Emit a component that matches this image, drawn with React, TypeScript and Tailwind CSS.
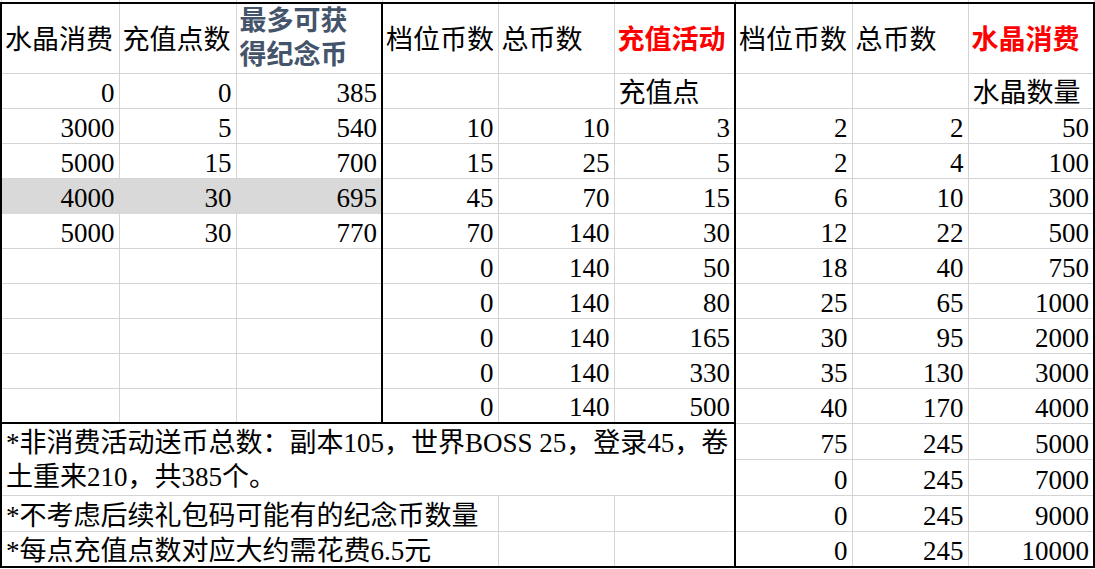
const WIDTHS = ['w-[118px]', 'w-[117px]', 'w-[146px]', 'w-[116px]', 'w-[116px]', 'w-[121px]', 'w-[117px]', 'w-[116px]', 'w-[126px]'];

const L = 'border-l-2 border-l-black';
const R = 'border-r-2 border-r-black';
const B = 'border-b-2 border-b-black';
const T = 'border-t-2 border-t-black';

// 水晶消费 / 充值点数 / 最多可获得纪念币
const LEFT = [
  ['0', '0', '385'],
  ['3000', '5', '540'],
  ['5000', '15', '700'],
  ['4000', '30', '695'],
  ['5000', '30', '770'],
  ['', '', ''],
  ['', '', ''],
  ['', '', ''],
  ['', '', ''],
  ['', '', ''],
];

// 档位币数 / 总币数 / 充值点
const MID = [
  ['', '', '充值点'],
  ['10', '10', '3'],
  ['15', '25', '5'],
  ['45', '70', '15'],
  ['70', '140', '30'],
  ['0', '140', '50'],
  ['0', '140', '80'],
  ['0', '140', '165'],
  ['0', '140', '330'],
  ['0', '140', '500'],
];

// 档位币数 / 总币数 / 水晶数量
const RIGHT = [
  ['', '', '水晶数量'],
  ['2', '2', '50'],
  ['2', '4', '100'],
  ['6', '10', '300'],
  ['12', '22', '500'],
  ['18', '40', '750'],
  ['25', '65', '1000'],
  ['30', '95', '2000'],
  ['35', '130', '3000'],
  ['40', '170', '4000'],
  ['75', '245', '5000'],
  ['0', '245', '7000'],
  ['0', '245', '9000'],
  ['0', '245', '10000'],
];

function Td({ v = '', cls = '', colSpan, rowSpan }: { v?: React.ReactNode; cls?: string; colSpan?: number; rowSpan?: number }) {
  const num = typeof v === 'string' && /^\d+$/.test(v);
  return (
    <td
      colSpan={colSpan}
      rowSpan={rowSpan}
      className={`border border-[#d4d4d4] px-[4px] p-0 align-bottom text-[27px] leading-[30px] whitespace-nowrap ${num ? 'text-right' : 'text-left'} ${cls}`}
    >
      {v}
    </td>
  );
}

function Th({ children, cls = '' }: { children: React.ReactNode; cls?: string }) {
  return (
    <td className={`border border-[#d4d4d4] ${T} px-[3px] py-0 align-middle text-left text-[27px] leading-[34px] whitespace-nowrap ${cls}`}>
      {children}
    </td>
  );
}

export default function App() {
  return (
    <div className="w-[1095px] h-[569px] overflow-hidden bg-white text-black font-['Liberation_Serif','Noto_Sans_CJK_SC',serif]">
      <table className="border-collapse table-fixed w-[1094px]">
        <colgroup>
          {WIDTHS.map((w, i) => (
            <col key={i} className={w} />
          ))}
        </colgroup>
        <tbody>
          {/* sliver of the row above */}
          <tr className="h-[3px]">
            {WIDTHS.map((_, i) => (
              <td key={i} className="border-x border-[#d4d4d4] p-0 text-[0px] leading-none" />
            ))}
          </tr>

          <tr className="h-[70px]">
            <Th cls={`${L} pt-[4px]`}>水晶消费</Th>
            <Th cls="pt-[4px]">充值点数</Th>
            <Th cls={`${R} font-bold text-[#44546a]`}>
              最多可获
              <br />
              得纪念币
            </Th>
            <Th cls="pt-[4px]">档位币数</Th>
            <Th cls="pt-[4px]">总币数</Th>
            <Th cls={`${R} pt-[4px] font-bold text-[#ff0000]`}>充值活动</Th>
            <Th cls="pt-[4px]">档位币数</Th>
            <Th cls="pt-[4px]">总币数</Th>
            <Th cls={`${R} pt-[4px] font-bold text-[#ff0000]`}>水晶消费</Th>
          </tr>

          {LEFT.map((l, i) => {
            const m = MID[i];
            const r = RIGHT[i];
            const gray = i === 3 ? 'bg-[#d9d9d9] border-[#d9d9d9]' : '';
            const last = i === LEFT.length - 1 ? B : '';
            return (
              <tr key={i} className="h-[35px]">
                <Td v={l[0]} cls={`${L} ${gray} ${last}`} />
                <Td v={l[1]} cls={`${gray} ${last}`} />
                <Td v={l[2]} cls={`${R} ${gray} ${last}`} />
                <Td v={m[0]} cls={last} />
                <Td v={m[1]} cls={last} />
                <Td v={m[2]} cls={`${R} ${last}`} />
                <Td v={r[0]} />
                <Td v={r[1]} />
                <Td v={r[2]} cls={R} />
              </tr>
            );
          })}

          <tr className="h-[36px]">
            <Td
              colSpan={6}
              rowSpan={2}
              cls={`${L} ${R} leading-[34px] pb-[1px]`}
              v={
                <>
                  *非消费活动送币总数：副本105，世界BOSS 25，登录45，卷
                  <br />
                  土重来210，共385个。
                </>
              }
            />
            <Td v={RIGHT[10][0]} />
            <Td v={RIGHT[10][1]} />
            <Td v={RIGHT[10][2]} cls={R} />
          </tr>
          <tr className="h-[36px]">
            <Td v={RIGHT[11][0]} />
            <Td v={RIGHT[11][1]} />
            <Td v={RIGHT[11][2]} cls={R} />
          </tr>
          <tr className="h-[36px]">
            <Td colSpan={4} cls={L} v="*不考虑后续礼包码可能有的纪念币数量" />
            <Td />
            <Td cls={R} />
            <Td v={RIGHT[12][0]} />
            <Td v={RIGHT[12][1]} />
            <Td v={RIGHT[12][2]} cls={R} />
          </tr>
          <tr className="h-[36px]">
            <Td colSpan={4} cls={`${L} ${B}`} v="*每点充值点数对应大约需花费6.5元" />
            <Td cls={B} />
            <Td cls={`${R} ${B}`} />
            <Td v={RIGHT[13][0]} cls={B} />
            <Td v={RIGHT[13][1]} cls={B} />
            <Td v={RIGHT[13][2]} cls={`${R} ${B}`} />
          </tr>
        </tbody>
      </table>
    </div>
  );
}
